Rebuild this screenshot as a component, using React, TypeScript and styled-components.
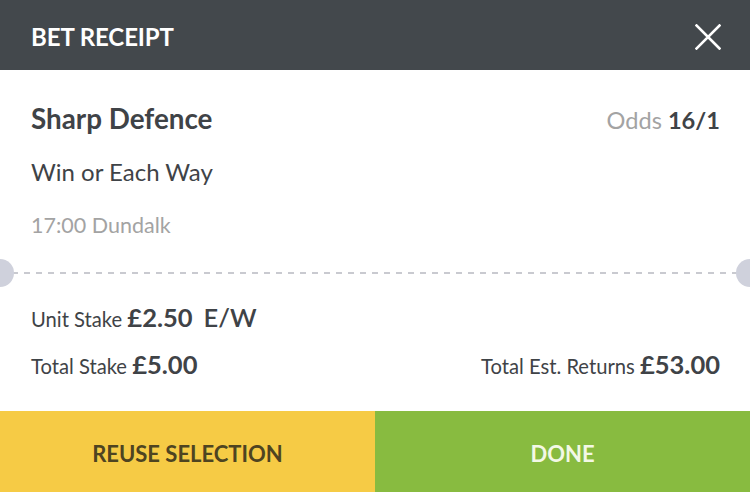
import React from "react";
import styled, { createGlobalStyle } from "styled-components";

const GlobalStyle = createGlobalStyle`
  html, body {
    margin: 0;
    padding: 0;
    background: #ffffff;
  }
  body {
    font-family: Lato, "Open Sans", sans-serif;
    -webkit-font-smoothing: antialiased;
  }
`;

const color = {
  header: "#43484c",
  text: "#3f4347",
  gray: "#a3a3a3",
  dash: "#c9cad0",
  notch: "#cfd1dc",
  yellow: "#f6cb45",
  green: "#88bb40",
};

const CloseIcon = () => (
  <svg width="26" height="26" viewBox="0 0 26 26" aria-hidden="true">
    <path
      d="M1.5 1.5 L24.5 24.5 M24.5 1.5 L1.5 24.5"
      stroke="#ffffff"
      strokeWidth="2.6"
      strokeLinecap="square"
      fill="none"
    />
  </svg>
);

const App = () => (
  <>
    <GlobalStyle />
    <Receipt>
      <Header>
        <Title>BET RECEIPT</Title>
        <CloseButton aria-label="Close">
          <CloseIcon />
        </CloseButton>
      </Header>
      <Selection>
        <TopRow>
          <Runner>Sharp Defence</Runner>
          <Odds>
            Odds <strong>16/1</strong>
          </Odds>
        </TopRow>
        <Market>Win or Each Way</Market>
        <Event>17:00 Dundalk</Event>
      </Selection>
      <Divider />
      <Stakes>
        <StakeRow>
          <Figure>
            Unit Stake <Amount>£2.50</Amount>
            <EachWay>E/W</EachWay>
          </Figure>
        </StakeRow>
        <StakeRow>
          <Figure>
            Total Stake <Amount>£5.00</Amount>
          </Figure>
          <Figure>
            Total Est. Returns <Amount>£53.00</Amount>
          </Figure>
        </StakeRow>
      </Stakes>
      <Actions>
        <ActionButton $tone="reuse">REUSE SELECTION</ActionButton>
        <ActionButton $tone="done">DONE</ActionButton>
      </Actions>
    </Receipt>
  </>
);

const Receipt = styled.div`
  width: 750px;
  height: 492px;
  display: flex;
  flex-direction: column;
  background: #ffffff;
  overflow: hidden;
`;

const Header = styled.div`
  height: 70px;
  flex-shrink: 0;
  display: flex;
  align-items: center;
  justify-content: space-between;
  padding: 0 29px 0 31px;
  background: ${color.header};
`;

const Title = styled.h1`
  margin: 3px 0 0;
  color: #ffffff;
  font-size: 24px;
  font-weight: 700;
  letter-spacing: -0.1px;
`;

const CloseButton = styled.button`
  display: flex;
  padding: 0;
  margin-top: 4px;
  border: 0;
  background: none;
  cursor: pointer;
`;

const Selection = styled.div`
  padding: 33px 30px 0 31px;
  display: flex;
  flex-direction: column;
  height: 170px;
  box-sizing: border-box;
`;

const TopRow = styled.div`
  display: flex;
  justify-content: space-between;
  align-items: baseline;
`;

const Runner = styled.div`
  color: ${color.text};
  font-size: 27.8px;
  font-weight: 700;
  line-height: 32px;
`;

const Odds = styled.div`
  color: ${color.gray};
  font-size: 23.6px;

  strong {
    color: ${color.text};
    font-weight: 700;
  }
`;

const Market = styled.div`
  margin-top: 22px;
  color: ${color.text};
  font-size: 24px;
  line-height: 30px;
`;

const Event = styled.div`
  margin-top: 26px;
  color: ${color.gray};
  font-size: 21.5px;
  line-height: 24px;
`;

const Divider = styled.div`
  position: relative;
  height: 28px;
  flex-shrink: 0;
  margin-top: 19px;
  background-image: linear-gradient(
    to right,
    ${color.dash} 0 6px,
    transparent 6px 12px
  );
  background-size: 12px 2px;
  background-repeat: repeat-x;
  background-position: 12px center;

  &::before,
  &::after {
    content: "";
    position: absolute;
    top: 0;
    width: 28px;
    height: 28px;
    border-radius: 50%;
    background: ${color.notch};
  }
  &::before {
    left: -14px;
  }
  &::after {
    right: -14px;
  }
`;

const Stakes = styled.div`
  flex: 1;
  display: flex;
  flex-direction: column;
  gap: 15px;
  padding: 15px 30px 0 31px;
`;

const StakeRow = styled.div`
  display: flex;
  justify-content: space-between;
  align-items: baseline;
`;

const Figure = styled.div`
  color: ${color.text};
  font-size: 20.2px;
  line-height: 30px;
`;

const Amount = styled.span`
  font-size: 25.5px;
  font-weight: 700;
`;

const EachWay = styled.span`
  margin-left: 11px;
  font-size: 25.5px;
  font-weight: 600;
`;

const Actions = styled.div`
  height: 81px;
  flex-shrink: 0;
  display: grid;
  grid-template-columns: 375px 375px;
`;

const ActionButton = styled.button<{ $tone: "reuse" | "done" }>`
  border: 0;
  padding: 3px 0 0;
  font-family: Lato, "Open Sans", sans-serif;
  font-size: 22px;
  font-weight: 700;
  background: ${(p) => (p.$tone === "reuse" ? color.yellow : color.green)};
  color: ${(p) => (p.$tone === "reuse" ? "#4e4421" : "#f3f8e6")};
  cursor: pointer;
`;

export default App;
